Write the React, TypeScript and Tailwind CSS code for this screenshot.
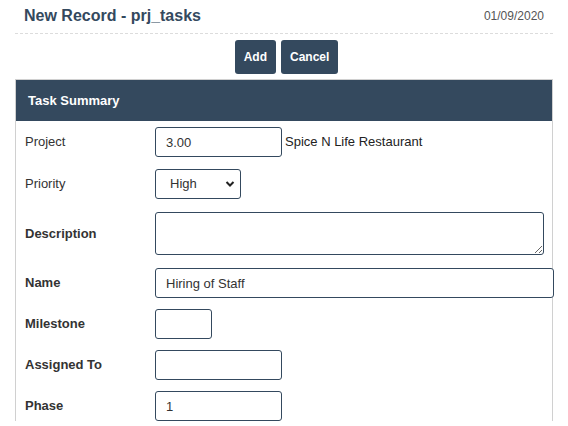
import React from 'react'

const font = { fontFamily: '"Liberation Sans", Arial, sans-serif' }

const Row = ({ label, children, className = '', bold = true }: { label: string; children: React.ReactNode; className?: string; bold?: boolean }) => (
    <div className={`flex items-center ${className}`}>
        <div className={`w-[130px] shrink-0 text-[13px] text-[#333] ${bold ? 'font-bold' : 'font-normal text-[#222]'}`}>{label}</div>
        <div className="flex items-center min-w-0 flex-1">{children}</div>
    </div>
)

const inputCls = "h-[30px] shrink-0 rounded-[3px] border border-[#34495e] bg-white px-[10px] text-[13px] text-[#333] outline-none"

export default function App() {
    return (
        <div style={font} className="w-[568px] h-[426px] overflow-hidden bg-white">
            <div className="mx-[15px]">
                <div className="flex items-center justify-between h-[34px] border-b border-dashed border-[#dcdcdc] pl-[9px] pr-[9px]">
                    <h1 className="text-[16px] font-bold text-[#34495e] pb-[2px]">New Record - prj_tasks</h1>
                    <span className="text-[12px] text-[#555] pb-[2px]">01/09/2020</span>
                </div>
                <div className="flex justify-center gap-[5px] pt-[6px] pb-[5px] pl-[5px]">
                    <button className="h-[34px] px-[9px] rounded-[3px] bg-[#34495e] text-white text-[12px] font-bold">Add</button>
                    <button className="h-[34px] px-[9px] rounded-[3px] bg-[#34495e] text-white text-[12px] font-bold">Cancel</button>
                </div>
                <div className="border-x border-t border-[#d0d0d0]">
                    <div className="h-[41px] bg-[#34495e] flex items-center px-[12px] text-white text-[13px] font-bold">Task Summary</div>
                    <div className="flex flex-col gap-[11px] pt-[6px] pl-[9px]">
                        <Row label="Project" bold={false}>
                            <input className={`${inputCls} w-[127px]`} defaultValue="3.00" />
                            <span className="ml-[3px] text-[13px] text-[#222]">Spice N Life Restaurant</span>
                        </Row>
                        <Row label="Priority" bold={false} className="mt-[1px]">
                            <div className="relative w-[86px]">
                                <select className={`${inputCls} w-full appearance-none pl-[14px]`} defaultValue="High">
                                    <option>High</option>
                                    <option>Medium</option>
                                    <option>Low</option>
                                </select>
                                <svg className="absolute right-[6px] top-[11px] pointer-events-none" width="10" height="8" viewBox="0 0 10 8">
                                    <path d="M1.5 2 L5 5.5 L8.5 2" stroke="#222" strokeWidth="2" fill="none" />
                                </svg>
                            </div>
                        </Row>
                        <Row label="Description" className="mt-[2px]">
                            <textarea className="block h-[43px] w-[389px] shrink-0 rounded-[3px] border border-[#34495e] bg-white px-[10px] text-[13px] outline-none" />
                        </Row>
                        <Row label="Name" className="mt-[2px]">
                            <input className={`${inputCls} w-[399px]`} defaultValue="Hiring of Staff" />
                        </Row>
                        <Row label="Milestone">
                            <input className={`${inputCls} w-[57px]`} />
                        </Row>
                        <Row label="Assigned To">
                            <input className={`${inputCls} w-[127px]`} />
                        </Row>
                        <Row label="Phase">
                            <input className={`${inputCls} w-[127px]`} defaultValue="1" />
                        </Row>
                    </div>
                </div>
            </div>
        </div>
    )
}
